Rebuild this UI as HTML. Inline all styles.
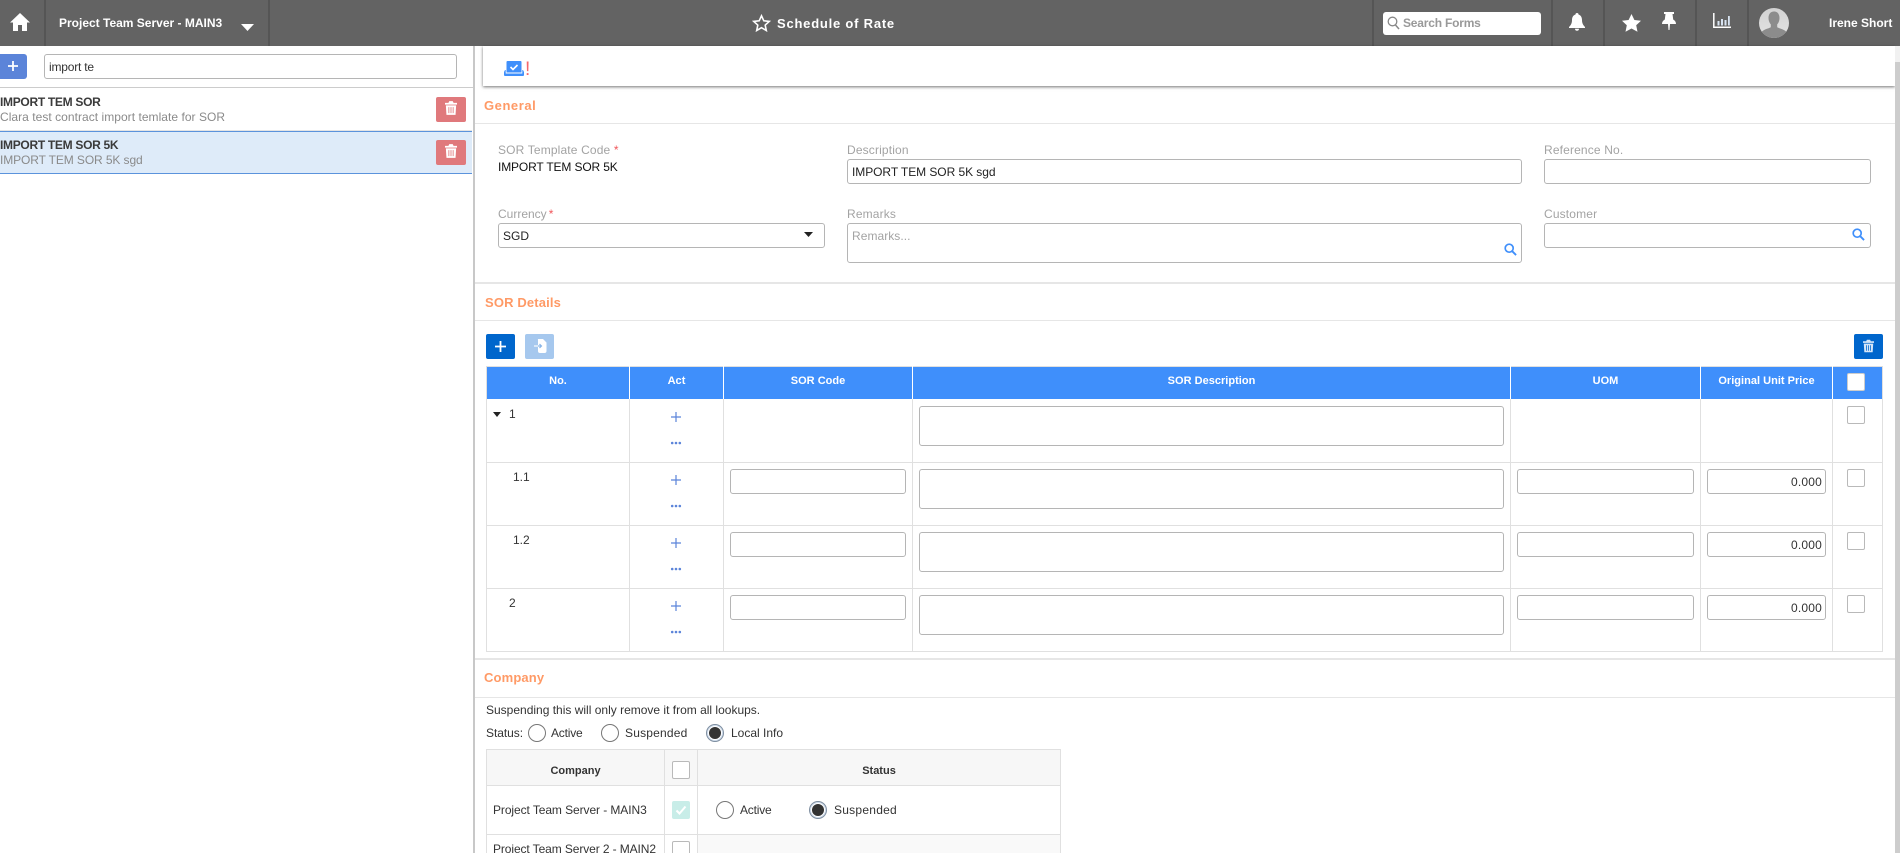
<!DOCTYPE html>
<html><head><meta charset="utf-8"><title>Schedule of Rate</title>
<style>
html,body{margin:0;padding:0;background:#fff;width:1900px;height:853px;overflow:hidden}
body{position:relative;font-family:"Liberation Sans",Arial,sans-serif;font-size:12px;color:#333}
div,svg{position:absolute;box-sizing:border-box}
.t{white-space:nowrap;line-height:16px;height:16px}
.w{color:#fff;font-weight:bold}
.inp{background:#fff;border:1px solid #b5b5b5;border-radius:3px}
.lbl{color:#a3a3a3;letter-spacing:.15px}
.sec{color:#ff9a66;font-weight:bold;font-size:13px;letter-spacing:.2px}
.ln{background:#e6e6e6;height:1px}
.v{background:#e0e0e0;width:1px}
.sep{background:#555;width:2px;top:0;height:46px}
.th{color:#fff;font-weight:bold;font-size:11px;text-align:center;top:373px;letter-spacing:.02px}
.cb{width:18px;height:18px;border:1px solid #b9b9b9;border-radius:2px;background:#fff}
.rd{width:18px;height:18px;border:1px solid #777;border-radius:50%;background:#fff}
.rs{width:18px;height:18px;border:1px solid #7e8ea0;border-radius:50%;background:#fff;box-shadow:0 0 0 1px #cfdcec inset}
.rs div{left:2px;top:2px;width:12px;height:12px;border-radius:50%;background:#333}
.num{text-align:right;color:#333;font-size:12px;letter-spacing:.2px}
</style></head>
<body>
<svg width="0" height="0" style="left:0;top:0"><defs>
<symbol id="trash" viewBox="0 0 14 16"><path fill="currentColor" d="M5 0h4l1 2h4v2H0V2h4zM1 5h12l-.7 11H1.700zM4 7v7h1V7zM6.500 7v7h1V7zM9 7v7h1V7z" fill-rule="evenodd"/></symbol>
<symbol id="mag" viewBox="0 0 14 14"><circle cx="5.600" cy="5.600" r="4.300" fill="none" stroke="#3f8ffb" stroke-width="1.800"/><path d="M8.800 8.800L13 13" stroke="#3f8ffb" stroke-width="2"/></symbol>
<symbol id="plus" viewBox="0 0 12 12"><path d="M6 1v10M1 6h10" stroke="#5b84d9" stroke-width="1.200"/></symbol>
<symbol id="dots" viewBox="0 0 12 4"><circle cx="2.200" cy="2" r="1.300" fill="#5b84d9"/><circle cx="6" cy="2" r="1.300" fill="#5b84d9"/><circle cx="9.800" cy="2" r="1.300" fill="#5b84d9"/></symbol>
</defs></svg>

<!-- top bar -->
<div style="left:0;top:0;width:1900px;height:46px;background:#636363"></div>
<div class="sep" style="left:44px"></div>
<div class="sep" style="left:268px"></div>
<div class="sep" style="left:1372px"></div>
<div class="sep" style="left:1551px"></div>
<div class="sep" style="left:1603px"></div>
<div class="sep" style="left:1695px"></div>
<div class="sep" style="left:1747px"></div>
<svg style="left:10px;top:13px" width="20" height="18" viewBox="0 0 20 18"><path fill="#fff" d="M10 0L0 9.500h3V18h5v-6h4v6h5V9.500h3z"/></svg>
<div class="t w" style="left:59px;top:15px;font-size:12px;letter-spacing:0">Project Team Server - MAIN3</div>
<svg style="left:241px;top:24px" width="13" height="7" viewBox="0 0 13 7"><path fill="#fff" d="M0 0h13L6.500 7z"/></svg>
<svg style="left:752px;top:14px" width="19" height="18" viewBox="0 0 19 18"><path fill="none" stroke="#fff" stroke-width="1.600" d="M9.500 1.800l2.300 5 5.400.6-4 3.700 1.100 5.400-4.800-2.800-4.800 2.800 1.100-5.400-4-3.700 5.400-.6z"/></svg>
<div class="t w" style="left:777px;top:16px;font-size:13px;letter-spacing:.78px">Schedule of Rate</div>
<div style="left:1383px;top:12px;width:158px;height:23px;background:#fff;border-radius:3px"></div>
<svg style="left:1387px;top:16px" width="13" height="14" viewBox="0 0 13 14"><circle cx="5.500" cy="5.500" r="4.300" fill="none" stroke="#888" stroke-width="1.300"/><path d="M8.500 9l3.500 4" stroke="#888" stroke-width="1.500"/></svg>
<div class="t" style="left:1403px;top:15px;color:#999;font-weight:bold;font-size:12px;letter-spacing:-.2px">Search Forms</div>
<svg style="left:1569px;top:13px" width="16" height="18" viewBox="0 0 16 18"><path fill="#fff" d="M8 0c1 0 1.500.6 1.500 1.500C12 2.300 13 4.500 13 7c0 3 1 5 3 7v1H0v-1c2-2 3-4 3-7 0-2.500 1-4.700 3.500-5.500C6.500.6 7 0 8 0zM6 15.800h4a2 2 0 0 1-4 0z"/></svg>
<svg style="left:1622px;top:14px" width="19" height="18" viewBox="0 0 19 18"><path fill="#fff" d="M9.500 0l2.900 6 6.600.8-4.800 4.500 1.300 6.500-6-3.300-6 3.300 1.300-6.500L0 6.800 6.600 6z"/></svg>
<svg style="left:1662px;top:12px" width="14" height="18" viewBox="0 0 14 18"><path fill="#fff" d="M2 0h10v2h-1.500l.7 5.500C13 8.500 14 10 14 12H8l-.5 6h-1L6 12H0c0-2 1-3.500 2.800-4.500L3.500 2H2z"/></svg>
<svg style="left:1713px;top:13px" width="18" height="16" viewBox="0 0 18 16"><path fill="none" stroke="#fff" stroke-width="1.500" d="M.8 0v14.200H18"/><path fill="#d8e4f2" d="M4.500 8h2v4.500h-2zM8 6h2v6.500H8zM11.500 7h2v5.500h-2zM15 3h1.800v9.500H15z"/></svg>
<div style="left:1759px;top:8px;width:30px;height:30px;border-radius:50%;background:linear-gradient(#d2d2d2,#e4e4e4);overflow:hidden">
<svg style="left:0;top:0" width="30" height="30" viewBox="0 0 30 30"><path fill="#8c8c8c" d="M15 3.500c3.500 0 5.500 2.600 5.500 6.500 0 2.700-1 5-2.300 6.400v2.800c2 1.200 6.300 1.800 8.800 4.300V30H3v-6.500c2.500-2.500 6.800-3.100 8.800-4.300v-2.800C10.500 15 9.500 12.700 9.500 10c0-3.900 2-6.500 5.500-6.500z"/></svg></div>
<div class="t w" style="left:1829px;top:15px;font-size:12px;letter-spacing:0">Irene Short</div>

<!-- left panel -->
<div style="left:473px;top:46px;width:2px;height:807px;background:#c8c8c8"></div>
<div style="left:0;top:54px;width:27px;height:25px;background:#5b84d9;border-radius:0 3px 3px 0"></div>
<svg style="left:7px;top:60px" width="12" height="12" viewBox="0 0 12 12"><path d="M6 1v10M1 6h10" stroke="#fff" stroke-width="1.800"/></svg>
<div class="inp" style="left:44px;top:54px;width:413px;height:25px"></div>
<div class="t" style="left:49px;top:59px;color:#333;letter-spacing:-.2px">import te</div>
<div style="left:0;top:87px;width:473px;height:1px;background:#ccc"></div>
<div class="t" style="left:0;top:94px;font-weight:bold;color:#3a3a3a;letter-spacing:-.3px">IMPORT TEM SOR</div>
<div class="t" style="left:0;top:109px;color:#8a8a8a;letter-spacing:.04px">Clara test contract import temlate for SOR</div>
<div style="left:436px;top:97px;width:30px;height:25px;background:#e0797c;border-radius:2px"></div>
<svg style="left:445px;top:101px;color:#fff" width="12" height="14"><use href="#trash"/></svg>
<div style="left:0;top:130px;width:472px;height:1px;background:#e4e4e4"></div>
<div style="left:0;top:131px;width:472px;height:43px;background:#deebf9;border-top:1px solid #5b93dc;border-bottom:1px solid #5b93dc"></div>
<div class="t" style="left:0;top:137px;font-weight:bold;color:#3a3a3a;letter-spacing:-.3px">IMPORT TEM SOR 5K</div>
<div class="t" style="left:0;top:152px;color:#8a8a8a;letter-spacing:-.1px">IMPORT TEM SOR 5K sgd</div>
<div style="left:436px;top:140px;width:30px;height:25px;background:#e0797c;border-radius:2px"></div>
<svg style="left:445px;top:144px;color:#fff" width="12" height="14"><use href="#trash"/></svg>

<!-- toolbar -->
<div style="left:483px;top:46px;width:1412px;height:40px;background:#fff;box-shadow:0 1px 3px rgba(0,0,0,.55)"></div>
<svg style="left:504px;top:61px" width="20" height="15" viewBox="0 0 20 15"><path fill="#3f8ffb" d="M3.500 0h13a1 1 0 0 1 1 1v10.500h-15V1a1 1 0 0 1 1-1z"/><path fill="#3f8ffb" d="M0 11l1-2h.7v3.500h16.600V9h.7l1 2v3a1 1 0 0 1-1 1H1a1 1 0 0 1-1-1z"/><path fill="none" stroke="#fff" stroke-width="1.600" d="M6.500 6l2.500 2.500 4.500-4.500"/></svg>
<div class="t" style="left:525px;top:62px;color:#f4686c;font-size:19px">!</div>

<!-- general -->
<div class="t sec" style="left:484px;top:98px;letter-spacing:.55px">General</div>
<div class="ln" style="left:475px;top:123px;width:1420px"></div>
<div class="t lbl" style="left:498px;top:142px">SOR Template Code <span style="color:#f0565a">*</span></div>
<div class="t" style="left:498px;top:159px;color:#111;letter-spacing:-.14px">IMPORT TEM SOR 5K</div>
<div class="t lbl" style="left:847px;top:142px">Description</div>
<div class="inp" style="left:847px;top:159px;width:675px;height:25px"></div>
<div class="t" style="left:852px;top:164px;color:#222;letter-spacing:-.06px">IMPORT TEM SOR 5K sgd</div>
<div class="t lbl" style="left:1544px;top:142px">Reference No.</div>
<div class="inp" style="left:1544px;top:159px;width:327px;height:25px"></div>
<div class="t lbl" style="left:498px;top:206px;letter-spacing:0">Currency<span style="color:#f0565a;margin-left:2px">*</span></div>
<div class="inp" style="left:498px;top:223px;width:327px;height:25px"></div>
<div class="t" style="left:503px;top:228px;color:#222">SGD</div>
<svg style="left:804px;top:232px" width="9" height="5" viewBox="0 0 9 5"><path fill="#222" d="M0 0h9L4.500 5z"/></svg>
<div class="t lbl" style="left:847px;top:206px">Remarks</div>
<div class="inp" style="left:847px;top:223px;width:675px;height:40px"></div>
<div class="t lbl" style="left:852px;top:228px;letter-spacing:.05px">Remarks...</div>
<svg style="left:1504px;top:243px" width="13" height="13"><use href="#mag"/></svg>
<div class="t lbl" style="left:1544px;top:206px">Customer</div>
<div class="inp" style="left:1544px;top:223px;width:327px;height:25px"></div>
<svg style="left:1852px;top:228px" width="13" height="13"><use href="#mag"/></svg>

<!-- SOR details -->
<div class="ln" style="left:475px;top:282px;width:1420px;height:2px"></div>
<div class="t sec" style="left:485px;top:295px;letter-spacing:.15px">SOR Details</div>
<div class="ln" style="left:475px;top:320px;width:1420px"></div>
<div style="left:486px;top:334px;width:29px;height:25px;background:#0066cc;border-radius:2px"></div>
<svg style="left:495px;top:341px" width="11" height="11" viewBox="0 0 11 11"><path d="M5.500 0v11M0 5.500h11" stroke="#fff" stroke-width="1.800"/></svg>
<div style="left:525px;top:334px;width:29px;height:25px;background:#a6c8ee;border-radius:2px"></div>
<svg style="left:533px;top:339px" width="14" height="14" viewBox="0 0 14 14"><path fill="#fff" d="M5 0h5l3.500 3.500V12a2 2 0 0 1-2 2H7a2 2 0 0 1-2-2V9h-0V5h0V1a1 1 0 0 1 0-1z"/><path d="M1 7h7.500M6.500 5l2 2-2 2" stroke="#8ab6e8" stroke-width="1.200" fill="none"/><path d="M1 7h4" stroke="#fff" stroke-width="1.200"/></svg>
<div style="left:1854px;top:334px;width:29px;height:25px;background:#0066cc;border-radius:2px"></div>
<svg style="left:1863px;top:339px;color:#d5e6f8" width="11" height="14"><use href="#trash"/></svg>

<div style="left:486px;top:366px;width:1397px;height:33px;background:#3f8ffb;border:1px solid #e0e0e0;border-bottom:0"></div>
<div class="v" style="left:486px;top:399px;height:252px"></div>
<div class="v" style="left:1882px;top:399px;height:252px"></div>
<div class="v" style="left:629px;top:399px;height:252px"></div>
<div class="v" style="left:723px;top:399px;height:252px"></div>
<div class="v" style="left:912px;top:399px;height:252px"></div>
<div class="v" style="left:1510px;top:399px;height:252px"></div>
<div class="v" style="left:1700px;top:399px;height:252px"></div>
<div class="v" style="left:1832px;top:399px;height:252px"></div>
<div style="left:629px;top:366px;width:1px;height:33px;background:#fff"></div>
<div style="left:723px;top:366px;width:1px;height:33px;background:#fff"></div>
<div style="left:912px;top:366px;width:1px;height:33px;background:#fff"></div>
<div style="left:1510px;top:366px;width:1px;height:33px;background:#fff"></div>
<div style="left:1700px;top:366px;width:1px;height:33px;background:#fff"></div>
<div style="left:1832px;top:366px;width:1px;height:33px;background:#fff"></div>
<div class="ln" style="left:486px;top:462px;width:1397px;background:#e0e0e0"></div>
<div class="ln" style="left:486px;top:525px;width:1397px;background:#e0e0e0"></div>
<div class="ln" style="left:486px;top:588px;width:1397px;background:#e0e0e0"></div>
<div class="ln" style="left:486px;top:651px;width:1397px;background:#e0e0e0"></div>

<div class="t th" style="left:487px;width:142px">No.</div>
<div class="t th" style="left:630px;width:93px">Act</div>
<div class="t th" style="left:724px;width:188px">SOR Code</div>
<div class="t th" style="left:913px;width:597px">SOR Description</div>
<div class="t th" style="left:1511px;width:189px">UOM</div>
<div class="t th" style="left:1701px;width:131px">Original Unit Price</div>
<div class="cb" style="left:1847px;top:373px;border-color:#ccc"></div>

<!-- row 1 -->
<svg style="left:493px;top:412px" width="8" height="5" viewBox="0 0 8 5"><path fill="#222" d="M0 0h8L4 5z"/></svg>
<div class="t" style="left:509px;top:406px">1</div>
<svg style="left:670px;top:411px" width="12" height="12"><use href="#plus"/></svg>
<svg style="left:670px;top:441px" width="12" height="4"><use href="#dots"/></svg>
<div class="inp" style="left:919px;top:406px;width:585px;height:40px"></div>
<div class="cb" style="left:1847px;top:406px"></div>

<!-- row 2 -->
<div class="t" style="left:513px;top:469px">1.1</div>
<svg style="left:670px;top:474px" width="12" height="12"><use href="#plus"/></svg>
<svg style="left:670px;top:504px" width="12" height="4"><use href="#dots"/></svg>
<div class="inp" style="left:730px;top:469px;width:176px;height:25px"></div>
<div class="inp" style="left:919px;top:469px;width:585px;height:40px"></div>
<div class="inp" style="left:1517px;top:469px;width:177px;height:25px"></div>
<div class="inp" style="left:1707px;top:469px;width:119px;height:25px"></div>
<div class="t num" style="left:1707px;top:474px;width:115px">0.000</div>
<div class="cb" style="left:1847px;top:469px"></div>

<!-- row 3 -->
<div class="t" style="left:513px;top:532px">1.2</div>
<svg style="left:670px;top:537px" width="12" height="12"><use href="#plus"/></svg>
<svg style="left:670px;top:567px" width="12" height="4"><use href="#dots"/></svg>
<div class="inp" style="left:730px;top:532px;width:176px;height:25px"></div>
<div class="inp" style="left:919px;top:532px;width:585px;height:40px"></div>
<div class="inp" style="left:1517px;top:532px;width:177px;height:25px"></div>
<div class="inp" style="left:1707px;top:532px;width:119px;height:25px"></div>
<div class="t num" style="left:1707px;top:537px;width:115px">0.000</div>
<div class="cb" style="left:1847px;top:532px"></div>

<!-- row 4 -->
<div class="t" style="left:509px;top:595px">2</div>
<svg style="left:670px;top:600px" width="12" height="12"><use href="#plus"/></svg>
<svg style="left:670px;top:630px" width="12" height="4"><use href="#dots"/></svg>
<div class="inp" style="left:730px;top:595px;width:176px;height:25px"></div>
<div class="inp" style="left:919px;top:595px;width:585px;height:40px"></div>
<div class="inp" style="left:1517px;top:595px;width:177px;height:25px"></div>
<div class="inp" style="left:1707px;top:595px;width:119px;height:25px"></div>
<div class="t num" style="left:1707px;top:600px;width:115px">0.000</div>
<div class="cb" style="left:1847px;top:595px"></div>

<!-- company -->
<div class="ln" style="left:475px;top:658px;width:1420px;height:2px"></div>
<div class="t sec" style="left:484px;top:670px;font-weight:bold;font-size:13px;letter-spacing:.15px">Company</div>
<div class="ln" style="left:475px;top:697px;width:1420px"></div>
<div class="t" style="left:486px;top:702px;letter-spacing:0">Suspending this will only remove it from all lookups.</div>
<div class="t" style="left:486px;top:725px;letter-spacing:-.05px">Status:</div>
<div class="rd" style="left:528px;top:724px"></div>
<div class="t" style="left:551px;top:725px;letter-spacing:-.2px">Active</div>
<div class="rd" style="left:601px;top:724px"></div>
<div class="t" style="left:625px;top:725px;letter-spacing:.2px">Suspended</div>
<div class="rs" style="left:706px;top:724px"><div></div></div>
<div class="t" style="left:731px;top:725px;letter-spacing:0">Local Info</div>

<div style="left:486px;top:749px;width:575px;height:36px;background:#f7f7f7"></div>
<div style="left:486px;top:785px;width:575px;height:68px;background:#fff"></div>
<div style="left:697px;top:834px;width:364px;height:19px;background:#f9f9f9"></div>
<div class="ln" style="left:486px;top:749px;width:575px;background:#e0e0e0"></div>
<div class="ln" style="left:486px;top:785px;width:575px;background:#e0e0e0"></div>
<div class="ln" style="left:486px;top:834px;width:575px;background:#e0e0e0"></div>
<div class="v" style="left:486px;top:749px;height:104px"></div>
<div class="v" style="left:664px;top:749px;height:104px"></div>
<div class="v" style="left:697px;top:749px;height:104px"></div>
<div class="v" style="left:1060px;top:749px;height:104px"></div>
<div class="t" style="left:487px;top:763px;width:177px;text-align:center;font-weight:bold;font-size:11px">Company</div>
<div class="cb" style="left:672px;top:761px"></div>
<div class="t" style="left:698px;top:763px;width:362px;text-align:center;font-weight:bold;font-size:11px">Status</div>
<div class="t" style="left:493px;top:802px;letter-spacing:-.08px">Project Team Server - MAIN3</div>
<div style="left:672px;top:801px;width:18px;height:18px;background:#c8ede8;border-radius:2px"></div>
<svg style="left:675px;top:804px" width="12" height="12" viewBox="0 0 12 12"><path d="M1.500 6.500l3 3 6-7" fill="none" stroke="#fff" stroke-width="2"/></svg>
<div class="rd" style="left:716px;top:801px"></div>
<div class="t" style="left:740px;top:802px;letter-spacing:-.2px">Active</div>
<div class="rs" style="left:809px;top:801px"><div></div></div>
<div class="t" style="left:834px;top:802px;letter-spacing:.25px">Suspended</div>
<div class="t" style="left:493px;top:841px;letter-spacing:-.1px">Project Team Server 2 - MAIN2</div>
<div class="cb" style="left:672px;top:841px"></div>

<!-- scrollbar -->
<div style="left:1895px;top:46px;width:5px;height:807px;background:#cdcdcd"></div>
<div style="left:1895px;top:46px;width:5px;height:16px;background:#f1f1f1"></div>
</body></html>
